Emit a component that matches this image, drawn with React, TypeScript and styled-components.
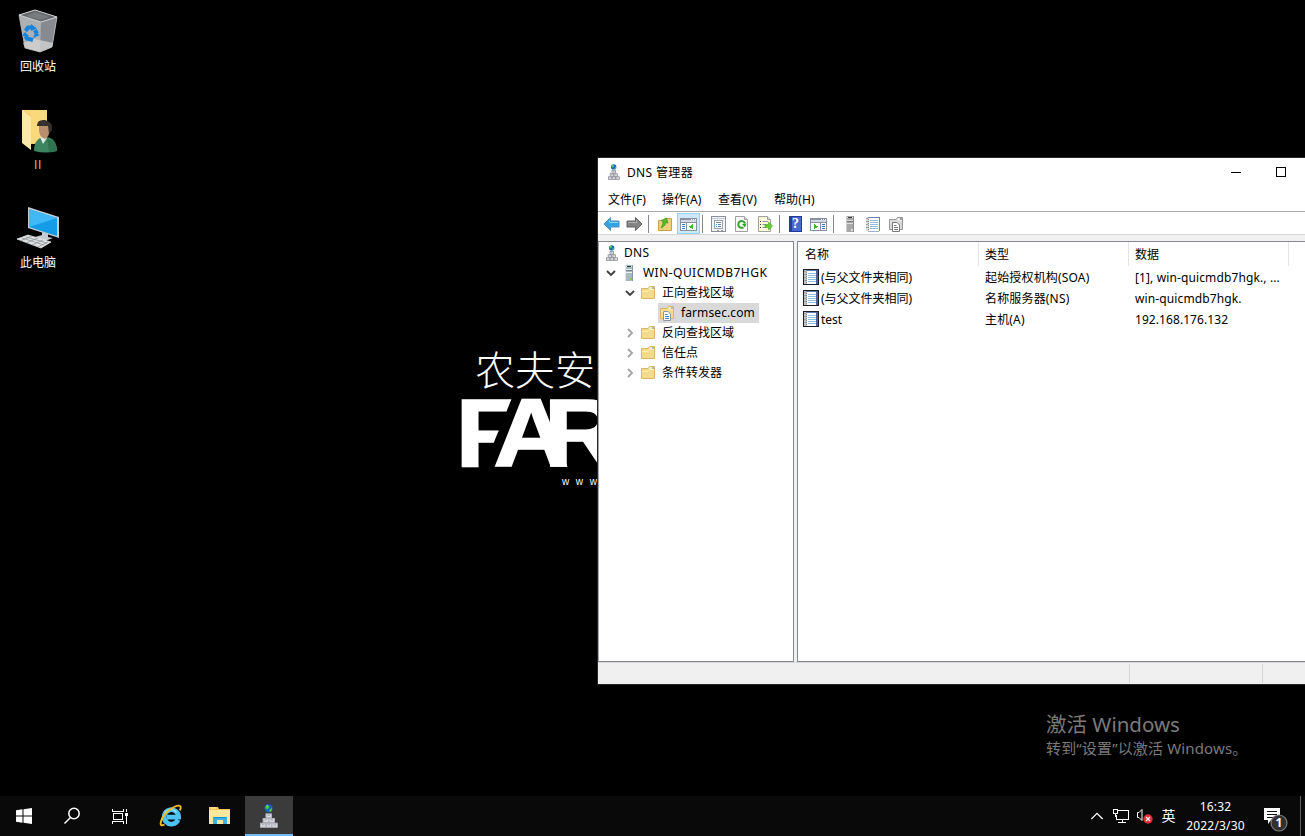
import React from "react";
import styled, { createGlobalStyle } from "styled-components";

const Global = createGlobalStyle`
  * { box-sizing: border-box; }
  body { margin: 0; background: #000; overflow: hidden; }
  svg { display: block; flex: none; }
`;

const uiFont = `"Noto Sans", "Noto Sans CJK SC", sans-serif`;

const Screen = styled.div`
  position: relative;
  display: flex;
  flex-direction: column;
  width: 1305px;
  height: 836px;
  overflow: hidden;
  background: #000;
  font-family: ${uiFont};
  font-size: 12px;
  line-height: 16px;
  color: #000;
  white-space: pre;
`;

const Desktop = styled.div`
  position: relative;
  height: 796px;
  overflow: hidden;
`;

const Shortcuts = styled.div`
  display: flex;
  flex-direction: column;
  width: 76px;
  padding-top: 8px;
`;

const Shortcut = styled.div<{ $user?: boolean }>`
  display: flex;
  flex-direction: column;
  align-items: center;
  gap: 3px;
  height: 98px;
  color: ${(p) => (p.$user ? "#e0ab7e" : "#fff")};
  font-family: ${(p) => (p.$user ? `"Liberation Sans", sans-serif` : uiFont)};
  letter-spacing: ${(p) => (p.$user ? 0.6 : 0)}px;
`;

const Wallpaper = styled.div`
  position: absolute;
  left: 462px;
  top: 344px;
  width: 200px;
  color: #fff;
`;

const BrandCn = styled.div`
  height: 50px;
  padding-left: 13px;
  font: 300 40px/48px "Noto Sans CJK SC", sans-serif;
`;

const BrandEn = styled.div`
  display: flex;
  height: 78px;
  font: 700 95.5px/78px "Liberation Sans", sans-serif;
  -webkit-text-stroke: 1.5px #fff;
  transform: scaleX(1.1);
  transform-origin: left;
`;

const BrandLetter = styled.span<{ $shift: number; $slanted?: boolean }>`
  margin-left: ${(p) => p.$shift}px;
  clip-path: ${(p) => (p.$slanted ? "polygon(0 0, 53px 0, 51px 5px, 24px 78px, 0 78px)" : "none")};
`;

const BrandUrl = styled.div`
  padding: 3px 0 0 100px;
  font: 10px/14px "Liberation Sans", sans-serif;
  letter-spacing: 6.6px;
`;

const Watermark = styled.div`
  position: absolute;
  left: 1046px;
  top: 711px;
  color: #7b7b7b;
`;

const WatermarkTitle = styled.div`
  font-size: 20.5px;
  line-height: 27px;
`;

const WatermarkText = styled.div`
  font-size: 15px;
  line-height: 21px;
  letter-spacing: 0.15px;
`;

const Window = styled.section`
  position: absolute;
  left: 597px;
  top: 157px;
  width: 752px;
  height: 528px;
  display: flex;
  flex-direction: column;
  border: 1px solid #262626;
  background: #f0f0f0;
`;

const TitleBar = styled.header`
  display: flex;
  align-items: center;
  height: 30px;
  padding-left: 10px;
  gap: 7px;
  background: #fff;
  letter-spacing: 0.35px;
`;

const TitleIcon = styled.span`
  margin-top: -2px;
`;

const WindowButtons = styled.div`
  display: flex;
  margin-left: auto;
  height: 28px;
  align-self: flex-start;
`;

const WindowButton = styled.div`
  display: grid;
  place-items: center;
  width: 45px;
`;

const MenuBar = styled.nav`
  display: flex;
  align-items: center;
  height: 24px;
  padding: 1px 0 0 10px;
  gap: 16px;
  background: #fff;
  border-bottom: 1px solid #aaacb0;
`;

const MenuItem = styled.span<{ $width: number }>`
  width: ${(p) => p.$width}px;
  letter-spacing: 0.1px;
`;

const Toolbar = styled.div`
  display: flex;
  align-items: flex-end;
  height: 23px;
  padding-left: 2px;
  background: #fff;
  border-bottom: 1px solid #d9d9d9;
`;

const ToolButton = styled.div<{ $active?: boolean }>`
  display: grid;
  place-items: center;
  width: 23px;
  height: 21px;
  margin-left: ${(p) => (p.$active ? 1 : 0)}px;
  background: ${(p) => (p.$active ? "#cce8ff" : "transparent")};
  box-shadow: ${(p) => (p.$active ? "inset 0 0 0 1px #99d1ff" : "none")};
`;

const ToolDivider = styled.div<{ $before: number }>`
  width: 1px;
  height: 18px;
  margin: 0 4px 1px ${(p) => p.$before}px;
  background: #83868c;
`;

const Panes = styled.div`
  display: flex;
  gap: 3px;
  height: 427px;
  padding-top: 6px;
`;

const Tree = styled.div`
  width: 196px;
  border: 1px solid #828790;
  border-left-color: #a4a7ad;
  background: #fff;
  padding-top: 1px;
`;

const TreeRow = styled.div<{ $indent: number }>`
  display: flex;
  align-items: center;
  height: 20px;
  padding-left: ${(p) => p.$indent}px;
`;

const Twisty = styled.div`
  display: grid;
  place-items: center;
  width: 14px;
  margin-right: 3px;
`;

const TreeLabel = styled.span<{ $spacing?: number }>`
  padding-left: 6px;
  letter-spacing: ${(p) => p.$spacing ?? 0}px;
`;

const SelectedNode = styled.span`
  display: flex;
  align-items: center;
  height: 20px;
  gap: 6px;
  padding: 0 4px 0 1px;
  letter-spacing: 0.1px;
  background: #d9d9d9;
`;

const List = styled.div`
  flex: 1;
  border: 1px solid #828790;
  background: #fff;
`;

const ListRow = styled.div<{ $header?: boolean }>`
  display: grid;
  grid-template-columns: 181px 150px 160px;
  height: ${(p) => (p.$header ? 25 : 21)}px;
  align-items: center;
`;

const HeaderCell = styled.div<{ $first?: boolean }>`
  height: 24px;
  margin-bottom: 1px;
  padding-left: ${(p) => (p.$first ? 7 : 6)}px;
  line-height: 25px;
  border-right: 1px solid #e3e3e3;
`;

const Cell = styled.div<{ $spacing?: number }>`
  display: flex;
  align-items: center;
  gap: 2px;
  padding-left: 6px;
  letter-spacing: ${(p) => p.$spacing ?? 0}px;
`;

const NameCell = styled(Cell)`
  padding-left: 5px;

  svg {
    margin-bottom: 1px;
  }
`;

const StatusBar = styled.footer`
  display: flex;
  flex: 1;
  padding: 1px 0;
  border-top: 1px solid #d7d7d7;
  background: #f0f0f0;
`;

const StatusPart = styled.div<{ $width: number }>`
  width: ${(p) => p.$width}px;
  border-right: 1px solid #d5d5d5;
`;

const Taskbar = styled.footer`
  display: flex;
  height: 40px;
  background: #090909;
  color: #fff;
`;

const TaskButton = styled.div<{ $active?: boolean; $gap?: number }>`
  display: grid;
  place-items: center;
  width: 48px;
  height: 40px;
  margin-left: ${(p) => p.$gap ?? 0}px;
  padding-top: ${(p) => (p.$active ? 2 : 0)}px;
  background: ${(p) => (p.$active ? "#3b3b3b" : "transparent")};
  border-bottom: ${(p) => (p.$active ? "2px solid #76b9ed" : "none")};
`;

const Tray = styled.div`
  display: flex;
  align-items: center;
  margin-left: auto;
  height: 40px;
`;

const TrayItem = styled.div<{ $width: number }>`
  display: grid;
  place-items: center;
  width: ${(p) => p.$width}px;
`;

const Language = styled(TrayItem)`
  padding-right: 2px;
  font-size: 14px;
`;

const NoticeItem = styled(TrayItem)`
  padding: 7px 0 0 4px;
`;

const Clock = styled.div`
  width: 66px;
  padding: 0 0 1px 1px;
  text-align: center;
  line-height: 19px;
  letter-spacing: 0.15px;
`;

const ShowDesktop = styled.div`
  width: 5px;
  height: 40px;
  border-left: 1px solid #606060;
`;

const RecycleBin = () => (
  <svg width="48" height="48" viewBox="0 0 48 48">
    <path d="M5 7 L11 40 L26 44 L38 39 L43 9 L27 14Z" fill="#aeb1b4" />
    <path d="M27 14 L43 9 L38 39 L26 44Z" fill="#878b8f" />
    <path d="M5 7 L21 2 L43 9 L27 14Z" fill="#62666a" stroke="#d4d6d8" />
    <path d="M12 8 L21 4 L36 9 L27 12Z" fill="#787b7e" />
    <path d="M9 35 L21 31 L39 35 L38 39 L26 44 L11 40Z" fill="#d6d6d6" opacity=".75" />
    <path d="M5 7 L11 40 L26 44 M26 44 L38 39 L43 9" fill="none" stroke="#c6c9cb" strokeWidth=".7" />
    <g fill="none" stroke="#1683dc" strokeWidth="4">
      <path d="M11.500 23 L14 19.500 L18 19.500" />
      <path d="M21 22 L23 26" />
      <path d="M19 32 L13 30.500 L11.500 28" />
    </g>
    <path d="M17 16 L23 20.500 L17 23Z M26 27 L19 30 L21 25Z M8 28 L11 24 L15 28Z" fill="#1683dc" />
  </svg>
);

const UserFolder = () => (
  <svg width="48" height="48" viewBox="0 0 48 48">
    <path d="M8 4 H33 V38 H15Z" fill="#f3cd68" />
    <path d="M17 9 V37 H33 V4 H8Z" fill="#f9d97b" />
    <path d="M8 4 L17 11 V44 L8 37Z" fill="#ffe9a8" />
    <path d="M20 45 C20 36 24 31 31 31 C39 31 43 37 43 45 Q32 48 20 45Z" fill="#3d8560" />
    <path d="M33 32 C39 34 43 38 43 45 L35 46Z" fill="#2f7351" />
    <path d="M26 31 L33 32 L29 38Z" fill="#e4e6e6" />
    <path d="M25 20 L36 19 Q36 31 31 33 Q24 31 25 20" fill="#b98e6d" />
    <path d="M23 20 Q23 13 31 14 Q39 16 38 24 L35 28 L34 20 Q27 20 23 20Z" fill="#35312f" />
  </svg>
);

const Computer = () => (
  <svg width="48" height="48" viewBox="2 0 48 48">
    <path d="M16 3 L47 13 V34 L16 24Z" fill="#c6ced4" />
    <path d="M17 5 L45 14 V32 L17 23Z" fill="#159ce9" />
    <path d="M17 5 L45 14 L17 23Z" fill="#42b9f7" />
    <path d="M30 28 L36 30 V33 L41 34 L33 37 L23 33 L30 31Z" fill="#c3ccd2" />
    <path d="M5 35 L16 31 L39 38 L29 44Z" fill="#dde0e2" stroke="#f0f1f2" strokeWidth=".7" />
    <path d="M10 34 L32 41 M14 33 L35 39 M8 37 L20 32 M14 39 L26 34 M20 41 L31 36 M26 43 L36 38" stroke="#8d9499" strokeWidth=".8" />
  </svg>
);

const DnsIcon = ({ width = 12, height = 16, light = false }: { width?: number; height?: number; light?: boolean }) => (
  <svg width={width} height={height} viewBox="0 0 12 16">
    <circle cx="5.700" cy="2.900" r="2.700" fill="#1b62bd" />
    <path d="M3.500 2 L5 .6 L6.200 1.800 L5.200 3.500 L4 3.200Z M6.200 4 L8 2.500 L7.700 4.800 L6.500 5.300Z" fill="#4fd03d" />
    <path d="M4 1.400 L5 .9 L5.200 1.600Z" fill="#bdeeff" />
    <g fill={light ? "#dedfe7" : "#e3e3e8"} stroke={light ? "#b4b5c2" : "#84868e"} strokeWidth=".7">
      <rect x="4" y="6.600" width="3.600" height="2.500" />
      <rect x="2.100" y="9.700" width="3.600" height="2.500" />
      <rect x="6" y="9.700" width="3.600" height="2.500" />
      <rect x=".4" y="12.800" width="3.500" height="2.700" />
      <rect x="4.200" y="12.800" width="3.500" height="2.700" />
      <rect x="8" y="12.800" width="3.500" height="2.700" />
    </g>
    <path d="M5 7.500 H6.700 M3 10.600 H4.700 M7 10.600 H8.700 M1.300 13.900 H3 M5 13.900 H6.800 M8.900 13.900 H10.600" stroke={light ? "#8b8c98" : "#a2a3a9"} strokeWidth=".5" />
  </svg>
);

const Arrow = ({ forward }: { forward?: boolean }) => (
  <svg width="17" height="16" viewBox="0 0 17 16">
    <path
      d={forward ? "M16 8 L9.5 1.5 V5 H1 V11 H9.5 V14.5Z" : "M1 8 L7.5 1.5 V5 H16 V11 H7.5 V14.5Z"}
      fill={forward ? "#858585" : "#31a4e6"}
      stroke={forward ? "#626262" : "#5790bc"}
    />
    <path d={forward ? "M2 6.5 H10.5 V4.5" : "M15 6.5 H6.5 V4.5"} fill="none" stroke={forward ? "#b5b5b5" : "#85d8f6"} />
  </svg>
);

const Folder = ({ gray, page }: { gray?: boolean; page?: boolean }) => (
  <svg width="16" height="16" viewBox="0 0 16 16">
    <path d="M1.500 3.500 H8 L9.500 1.500 H14.500 V13.500 H1.500Z" fill={gray ? "#d8d8d8" : "#f6da8c"} stroke={gray ? "#989898" : "#d9b566"} />
    <path d="M2 6.500 H8 L10 4.500 H14" fill="none" stroke={gray ? "#eee" : "#fff0bc"} />
    <path d="M9.500 3 H12" stroke="#fff" />
    <path d="M12 3 H14" stroke={gray ? "#666" : "#4c9fe0"} />
    {page && (
      <g>
        <path d="M4.500 6.500 H9 L11.500 9 V15.500 H4.500Z" fill="#fff" stroke={gray ? "#777" : "#8c969e"} />
        <path d="M6 9.500 H8.500 M6 11.500 H10 M6 13.500 H10" stroke={gray ? "#777" : "#3d87d1"} />
      </g>
    )}
  </svg>
);

const FolderUp = () => (
  <svg width="16" height="16" viewBox="0 0 16 16">
    <path d="M1.500 4.500 H7 L8.500 2.500 H14.500 V14.500 H1.500Z" fill="#efcf7c" stroke="#c9a14b" />
    <path d="M4 12 C8 10 9 8 8.500 6.500 L11 7 L9.500 2 L4 4.500 L6 5.500 C6 8 5 10 4 12Z" fill="#50bd26" stroke="#348b1c" strokeWidth=".6" />
  </svg>
);

const PaneIcon = ({ right }: { right?: boolean }) => (
  <svg width="17" height="16" viewBox="0 0 17 16" shapeRendering="crispEdges">
    <rect x=".5" y="2.500" width="16" height="12" fill="#fff" stroke="#8b91a0" />
    <path d="M1 3.500 H16 M1 6.500 H16" stroke="#8b91a0" />
    <path d="M1 5 H16" stroke="#d5d9e5" strokeWidth="2" />
    <path d="M11 3.500 H12 M13 3.500 H14 M15 3.500 H16" stroke="#fff" />
    {right ? (
      <g>
        <path d="M10.500 7 V14" stroke="#8b91a0" />
        <path d="M12 8.500 H15 M12 10.500 H15 M12 12.500 H15" stroke="#397fcd" />
        <path d="M4 8 L8 10.500 L4 13.500Z" fill="#3eb629" />
      </g>
    ) : (
      <g>
        <path d="M6.500 7 V14" stroke="#8b91a0" />
        <path d="M2 8.500 H5 M2 10.500 H5 M2 12.500 H5" stroke="#397fcd" />
        <path d="M13 8 L9 10.500 L13 13.500Z" fill="#3eb629" />
      </g>
    )}
  </svg>
);

const Properties = () => (
  <svg width="16" height="16" viewBox="0 0 16 16" shapeRendering="crispEdges">
    <path d="M.5 .5 H14.500 V15.500 H.5Z" fill="#f3f4f7" stroke="#8a91a0" />
    <path d="M1 2.500 H14" stroke="#c5cad6" />
    <rect x="3.500" y="4.500" width="8" height="8" fill="#fff" stroke="#9aa0ad" />
    <path d="M5 6.500 H10 M7 8.500 H10 M7 10.500 H10" stroke="#758396" />
    <path d="M5 8.500 H6 M5 10.500 H6" stroke="#318ae0" />
    <path d="M6 14.500 H8 M10 14.500 H12" stroke="#999" />
  </svg>
);

const Page = ({ kind }: { kind: "refresh" | "export" }) => (
  <svg width="17" height="16" viewBox="-1 0 17 16">
    <path d="M1.500 .5 H10.500 L13.500 3.500 V15.500 H1.500Z" fill={kind === "export" ? "#fff9dc" : "#fafafa"} stroke="#a0a0a0" />
    <path d="M10.500 .5 V3.500 H13.500" fill="#ddd" stroke="#a0a0a0" />
    {kind === "refresh" ? (
      <g>
        <path d="M9.500 11.300 A3.400 3.400 0 1 1 10.900 7.500" fill="none" stroke="#35a52c" strokeWidth="2" />
        <path d="M8 8 L12.500 7.500 L11 11.500Z" fill="#35a52c" />
      </g>
    ) : (
      <g>
        <path d="M3 5.500 H4 M3 8.500 H4 M3 11.500 H4" stroke="#333" />
        <path d="M5.500 5.500 H11 M5.500 8.500 H9 M5.500 11.500 H9" stroke="#9290b5" />
        <path d="M8 8.500 H11.500 V6 L15.600 10 L11.500 14 V11.500 H8Z" fill="#67cc2f" stroke="#42a521" strokeWidth=".6" />
      </g>
    )}
  </svg>
);

const HelpBox = styled.span`
  display: block;
  width: 13px;
  height: 16px;
  border: 1px solid #22399b;
  background: linear-gradient(90deg, #293d9b 2px, #4868d2 2px);
  color: #fff;
  font: 700 14px/14px "Liberation Serif", serif;
  text-align: center;
`;

const Server = ({ gray }: { gray?: boolean }) => (
  <svg width="16" height="16" viewBox="0 0 16 16" shapeRendering="crispEdges">
    <rect x="4" y="0" width="8" height="16" fill={gray ? "#a8a8a8" : "#a9b7bf"} />
    <path d="M4.500 0 V16" stroke={gray ? "#cfcfcf" : "#dbe4e9"} />
    <path d="M11.500 0 V16" stroke={gray ? "#8b8b8b" : "#8799a3"} />
    <path d="M5 1.500 H11 M5 4.500 H11 M5 7.500 H11" stroke={gray ? "#e0e0e0" : "#e9f2f6"} />
    <path d="M6 1.500 H10" stroke="#333a3e" />
    <path d="M5 5.500 H11" stroke={gray ? "#777" : "#6f7e86"} />
    <path d="M9 14 H11" stroke={gray ? "#ddd" : "#6adb20"} strokeWidth="2" />
  </svg>
);

const Notebook = ({ boxed }: { boxed?: boolean }) => (
  <svg width="16" height="16" viewBox="0 0 16 16" shapeRendering="crispEdges">
    <path d="M2 1 H15 V15 H2Z" fill="#fff" />
    <path d="M5 4.500 H13 M5 6.500 H13 M5 8.500 H13 M5 10.500 H13 M5 12.500 H13" stroke="#8fbddc" />
    <path d="M3 1.500 H14" stroke="#5f7fb6" />
    <path d="M14 1 V15" stroke={boxed ? "#51609b" : "#6a83b8"} strokeWidth={boxed ? 2 : 1} />
    <path d="M3 15.500 H14" stroke="#9bb0cc" />
    <path d="M2.500 1 V15" stroke={boxed ? "#c2c4c6" : "#dcdcdc"} strokeWidth="3" />
    <path d="M3.500 1 V15" stroke="#7f8487" strokeWidth="1" strokeDasharray="1 1" />
    <path d="M1 2.500 H3 M1 5.500 H3 M1 8.500 H3 M1 11.500 H3" stroke="#9b9fa2" />
    {boxed && <path d="M.5 .5 H15.500 V15.500 H.5Z" fill="none" stroke="#1b1d22" />}
  </svg>
);

const Chevron = ({ open }: { open?: boolean }) => (
  <svg width="10" height="10" viewBox="0 0 10 10">
    <path d={open ? "M1 3 L5 7 L9 3" : "M3 1 L7 5 L3 9"} fill="none" stroke={open ? "#404040" : "#a6a6a6"} strokeWidth="1.900" />
  </svg>
);

const TaskView = () => (
  <svg width="16" height="17" viewBox="0 0 16 17" shapeRendering="crispEdges" fill="none" stroke="#fff">
    <path d="M.5 1 V3.500 H11.500 V1 M.5 16 V13.500 H11.500 V16 M1.500 5.500 H10.500 V11.500 H1.500Z M14.500 1 V4 M14.500 8 V16" />
    <path d="M13 6 H16" strokeWidth="3" />
  </svg>
);

const InternetExplorer = () => (
  <svg width="26" height="24" viewBox="0 0 26 24">
    <path d="M20 15.800 A7.200 7.200 0 1 1 20.600 13.200 H9" fill="none" stroke="#4cc3f3" strokeWidth="4.800" />
    <path d="M6.500 9.500 A7.500 7.500 0 0 1 18.500 8" fill="none" stroke="#a5e6fb" strokeWidth="1.400" />
    <path d="M6.500 20.500 Q2.500 22.500 2.600 19.500 Q3.500 13 10 7 Q17 1.500 21 1.600 Q24 2 21.800 6.500" fill="none" stroke="#f3bd22" strokeWidth="1.900" />
  </svg>
);

const Explorer = () => (
  <svg width="22" height="20" viewBox="0 0 22 20">
    <path d="M0 1 H9 L10 3 H21 V18 H0Z" fill="#f2c85b" />
    <path d="M0 4 H21 V18 H0Z" fill="#ffe79c" />
    <path d="M2 2 H7" stroke="#fff2b8" />
    <path d="M4 18 V11 H18 V18 H14 V14 H8 V18Z" fill="#3bafe6" />
    <path d="M5 11.500 H17" stroke="#168dd0" />
  </svg>
);

const Notifications = () => (
  <svg width="26" height="26" viewBox="0 0 26 26">
    <path d="M1 1 H17 V13 H8 L5 17 V13 H1Z" fill="#fff" />
    <path d="M4 4.500 H14 M4 7.500 H14 M4 10.500 H10" stroke="#111" />
    <circle cx="16" cy="16" r="8" fill="#303030" stroke="#7b7b7b" strokeWidth="1.200" />
    <text x="16" y="20.300" fill="#fff" fontFamily="Noto Sans" fontSize="12" fontWeight="700" textAnchor="middle">1</text>
  </svg>
);

const zones = ["反向查找区域", "信任点", "条件转发器"];

const records = [
  { name: "(与父文件夹相同)", type: "起始授权机构(SOA)", data: "[1], win-quicmdb7hgk., ...", space: 0.12 },
  { name: "(与父文件夹相同)", type: "名称服务器(NS)", data: "win-quicmdb7hgk.", space: 0.12 },
  { name: "test", type: "主机(A)", data: "192.168.176.132", space: 0.07 },
];

export default function App() {
  return (
    <Screen>
      <Global />
      <Desktop>
        <Shortcuts>
          <Shortcut><RecycleBin />回收站</Shortcut>
          <Shortcut $user><UserFolder />II</Shortcut>
          <Shortcut><Computer />此电脑</Shortcut>
        </Shortcuts>
        <Wallpaper>
          <BrandCn>农夫安</BrandCn>
          <BrandEn>
            <BrandLetter $shift={-6} $slanted>F</BrandLetter>
            <BrandLetter $shift={-24}>A</BrandLetter>
            <BrandLetter $shift={-23}>R</BrandLetter>
          </BrandEn>
          <BrandUrl>www</BrandUrl>
        </Wallpaper>
        <Watermark>
          <WatermarkTitle>激活 Windows</WatermarkTitle>
          <WatermarkText>转到“设置”以激活 Windows。</WatermarkText>
        </Watermark>
        <Window>
          <TitleBar>
            <TitleIcon><DnsIcon /></TitleIcon>
            DNS 管理器
            <WindowButtons>
              <WindowButton><svg width="10" height="10"><path d="M0 5.500 H10" stroke="#000" /></svg></WindowButton>
              <WindowButton><svg width="10" height="10"><rect x=".5" y=".5" width="9" height="9" fill="none" stroke="#000" /></svg></WindowButton>
              <WindowButton><svg width="10" height="10"><path d="M0 0 L10 10 M10 0 L0 10" stroke="#000" /></svg></WindowButton>
            </WindowButtons>
          </TitleBar>
          <MenuBar>
            <MenuItem $width={38}>文件(F)</MenuItem>
            <MenuItem $width={40}>操作(A)</MenuItem>
            <MenuItem $width={40}>查看(V)</MenuItem>
            <MenuItem $width={42}>帮助(H)</MenuItem>
          </MenuBar>
          <Toolbar>
            <ToolButton><Arrow /></ToolButton>
            <ToolButton><Arrow forward /></ToolButton>
            <ToolDivider $before={2} />
            <ToolButton><FolderUp /></ToolButton>
            <ToolButton $active><PaneIcon /></ToolButton>
            <ToolDivider $before={2} />
            <ToolButton><Properties /></ToolButton>
            <ToolButton><Page kind="refresh" /></ToolButton>
            <ToolButton><Page kind="export" /></ToolButton>
            <ToolDivider $before={3} />
            <ToolButton><HelpBox>?</HelpBox></ToolButton>
            <ToolButton><PaneIcon right /></ToolButton>
            <ToolDivider $before={3} />
            <ToolButton><Server gray /></ToolButton>
            <ToolButton><Notebook /></ToolButton>
            <ToolButton><Folder gray page /></ToolButton>
          </Toolbar>
          <Panes>
            <Tree>
              <TreeRow $indent={7}><DnsIcon /><TreeLabel $spacing={0.3}>DNS</TreeLabel></TreeRow>
              <TreeRow $indent={5}>
                <Twisty><Chevron open /></Twisty><Server />
                <TreeLabel $spacing={0.46}>WIN-QUICMDB7HGK</TreeLabel>
              </TreeRow>
              <TreeRow $indent={24}>
                <Twisty><Chevron open /></Twisty><Folder />
                <TreeLabel>正向查找区域</TreeLabel>
              </TreeRow>
              <TreeRow $indent={59}>
                <SelectedNode><Folder page />farmsec.com</SelectedNode>
              </TreeRow>
              {zones.map((zone) => (
                <TreeRow $indent={24} key={zone}>
                  <Twisty><Chevron /></Twisty><Folder />
                  <TreeLabel>{zone}</TreeLabel>
                </TreeRow>
              ))}
            </Tree>
            <List>
              <ListRow $header>
                <HeaderCell $first>名称</HeaderCell>
                <HeaderCell>类型</HeaderCell>
                <HeaderCell>数据</HeaderCell>
              </ListRow>
              {records.map((r) => (
                <ListRow key={r.type}>
                  <NameCell><Notebook boxed />{r.name}</NameCell>
                  <Cell $spacing={0.17}>{r.type}</Cell>
                  <Cell $spacing={r.space}>{r.data}</Cell>
                </ListRow>
              ))}
            </List>
          </Panes>
          <StatusBar>
            <StatusPart $width={532} />
            <StatusPart $width={133} />
          </StatusBar>
        </Window>
      </Desktop>
      <Taskbar>
        <TaskButton>
          <svg width="16" height="16" fill="#fff"><path d="M0 2.300 L6.500 1.300 V7.500 H0Z M7.500 1.200 L16 0 V7.500 H7.500Z M0 8.500 H6.500 V14.700 L0 13.700Z M7.500 8.500 H16 V16 L7.500 14.800Z" /></svg>
        </TaskButton>
        <TaskButton>
          <svg width="18" height="18" fill="none" stroke="#fff" strokeWidth="1.500"><circle cx="11" cy="6.500" r="5.200" /><path d="M7.500 10.500 L1.500 16.500" /></svg>
        </TaskButton>
        <TaskButton><TaskView /></TaskButton>
        <TaskButton $gap={3}><InternetExplorer /></TaskButton>
        <TaskButton $gap={1}><Explorer /></TaskButton>
        <TaskButton $gap={1} $active><DnsIcon width={18} height={24} light /></TaskButton>
        <Tray>
          <TrayItem $width={24}>
            <svg width="13" height="8" fill="none" stroke="#fff" strokeWidth="1.300"><path d="M.3 7 L6 1.300 L11.700 7" /></svg>
          </TrayItem>
          <TrayItem $width={24}>
            <svg width="17" height="15" fill="none" stroke="#fff" shapeRendering="crispEdges"><path d="M5 1.500 H15.500 V10.500 H3.500 V6 M9.500 11 V13.500 M5 13.500 H13 M.5 .5 H4.500 V4.500 H.5Z M2.500 5 V8" /></svg>
          </TrayItem>
          <TrayItem $width={24}>
            <svg width="17" height="16" viewBox="1 0 17 16"><path d="M1.500 4.500 H3 L6 1.500 V12.500 L3 9.500 H1.500Z" fill="none" stroke="#fff" /><circle cx="12" cy="11" r="4.700" fill="#df2b35" /><path d="M10 9 L14 13 M14 9 L10 13" stroke="#fff" strokeWidth="1.200" /></svg>
          </TrayItem>
          <Language $width={25}>英</Language>
          <Clock>16:32<br />2022/3/30</Clock>
          <NoticeItem $width={52}><Notifications /></NoticeItem>
          <ShowDesktop />
        </Tray>
      </Taskbar>
    </Screen>
  );
}
